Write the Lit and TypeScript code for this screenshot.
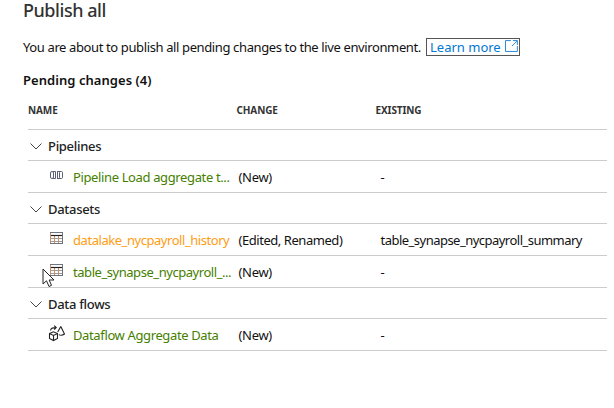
import { LitElement, html, css, svg } from "lit";
import { customElement, property } from "lit/decorators.js";

type Kind = "pipeline" | "dataset" | "dataflow";
interface Change { name: string; change: string; existing: string; edited?: boolean; fit: string }
interface Group { title: string; kind: Kind; items: Change[] }

const groups: Group[] = [
  { title: "Pipelines", kind: "pipeline", items: [
    { name: "Pipeline Load aggregate t...", change: "(New)", existing: "-", fit: "snug" },
  ] },
  { title: "Datasets", kind: "dataset", items: [
    { name: "datalake_nycpayroll_history", change: "(Edited, Renamed)", existing: "table_synapse_nycpayroll_summary", edited: true, fit: "tight" },
    { name: "table_synapse_nycpayroll_...", change: "(New)", existing: "-", fit: "tight" },
  ] },
  { title: "Data flows", kind: "dataflow", items: [
    { name: "Dataflow Aggregate Data", change: "(New)", existing: "-", fit: "snug" },
  ] },
];

@customElement("kind-icon")
export class KindIcon extends LitElement {
  @property() kind: Kind = "dataset";
  static styles = css`
    :host { display: block; width: 18px; height: 18px; }
    svg { display: block; overflow: visible; }
  `;
  render() {
    const art = {
      pipeline: svg`<g fill="none" stroke="#5b6070" stroke-width="1">
        <rect x="2.5" y="4.5" width="3" height="7" rx="1.5"/>
        <path d="M5 4.5H7.5V11.5H5"/>
        <path d="M9 4.5H13M9 11.5H13M9.5 4.5V11.5"/>
        <rect x="11.5" y="4.5" width="3" height="7" rx="1"/></g>`,
      dataset: svg`<g fill="none" stroke-width="1">
        <path stroke="#9b9b9b" d="M3 8.5H14M3 11.5H14"/>
        <path stroke="#c98f66" d="M2.5 2V14M6.5 6V13M10.5 6V13"/>
        <path stroke="#6d7480" d="M2 2.5H15M2 13.5H15M14.5 2V14"/>
        <path stroke="#222" stroke-width="1.2" d="M3 5.5H14"/></g>`,
      dataflow: svg`<g fill="none" stroke="#222" stroke-width="1.1">
        <path d="M1.5 8.6L5.5 6.8L9.5 8.6V13.4L5.5 15.6L1.5 13.4ZM1.5 8.6L5.5 10.5L9.5 8.6M5.5 10.5V15.6"/>
        <path d="M2.5 5.5Q2.8 2.5 8 2.6M6.2 .7L8.2 2.6L6.2 4.5"/>
        <path d="M12.8 1.5L16.5 9Q13.5 11.2 10.8 9.6M12.8 1.5L9.7 7"/></g>`,
    }[this.kind];
    return html`<svg width="18" height="18" viewBox="0 0 18 18">${art}</svg>`;
  }
}

@customElement("app-root")
export class AppRoot extends LitElement {
  static styles = css`
    :host {
      display: block; box-sizing: border-box; width: 614px; height: 408px; overflow: hidden; position: relative;
      background: #fff; color: #111; font: 13px/18px "Noto Sans", "Open Sans", sans-serif;
    }
    span, h1, h2 { white-space: nowrap; }
    .title { margin: 0 0 0 23px; height: 38px; font-size: 18px; line-height: 21px; font-weight: 500; color: #333; letter-spacing: -.45px; }
    .intro { display: flex; margin-left: 23px; height: 33px; }
    .sentence { width: 403px; letter-spacing: -.38px; line-height: 19px; }
    .link { box-sizing: border-box; width: 94px; height: 18px; border: 1px solid #555; color: #0078d4; display: flex; padding-left: 3px; line-height: 17px; }
    .more { width: 76px; }
    .out { display: block; }
    .pending { margin: 0 0 0 23px; height: 32px; font-size: 13px; line-height: 18px; font-weight: 600; letter-spacing: .05px; }
    .table { margin-left: 28px; width: 579px; }
    .row { box-sizing: border-box; display: grid; grid-template-columns: 210.5px 142px 1fr; height: 32px; border-bottom: 1px solid #ccc; }
    .head { height: 27px; grid-template-columns: 208.5px 139px 1fr; font-size: 10px; line-height: 15px; font-weight: 700; color: #333; letter-spacing: -.1px; }
    .group { display: flex; height: 31px; line-height: 33px; font-weight: 500; color: #222; letter-spacing: -.3px; }
    .chev { width: 20px; height: 30px; }
    .item { line-height: 33px; letter-spacing: -.3px; }
    .name { display: flex; color: #458000; }
    .name.edited { color: #ff9c12; }
    .snug { letter-spacing: -.37px; }
    .tight { letter-spacing: -.45px; }
    .dense { letter-spacing: -.52px; }
    .icon { width: 45px; padding: 6px 0 0 20px; box-sizing: border-box; }
    .cursor { position: absolute; left: 42px; top: 268px; }
  `;
  render() {
    return html`
      <h1 class="title">Publish all</h1>
      <div class="intro">
        <span class="sentence">You are about to publish all pending changes to the live environment.</span>
        <a class="link"><span class="more">Learn more</span>
          <svg class="out" width="14" height="15" viewBox="0 0 14 15" fill="none" stroke="#2b88d8">
            <path d="M6 1.5H.5V12.5H12.5V7M8 1.5H12.5V6M12.5 1.5L7 7"/></svg></a>
      </div>
      <h2 class="pending">Pending changes (4)</h2>
      <div class="table">
        <div class="row head"><span>NAME</span><span>CHANGE</span><span>EXISTING</span></div>
        ${groups.map((g) => html`
          <div class="row group">
            <svg class="chev" viewBox="0 0 20 30" fill="none" stroke="#444"><path d="M2.5 13.5L8 19L13.5 13.5"/></svg>
            <span>${g.title}</span>
          </div>
          ${g.items.map((i) => html`
            <div class="row item">
              <span class="name ${i.edited ? "edited" : ""}"><kind-icon class="icon" .kind=${g.kind}></kind-icon><span class="${i.fit}">${i.name}</span></span>
              <span class="${i.edited ? "tight" : ""}">${i.change}</span><span class="dense">${i.existing}</span>
            </div>`)}`)}
      </div>
      <svg class="cursor" width="13" height="20" viewBox="0 0 13 20"><path d="M1 1V16L4.5 12.8L7 18.5L9.5 17.4L7.2 12H12Z" fill="#fff" stroke="#222"/></svg>
    `;
  }
}
